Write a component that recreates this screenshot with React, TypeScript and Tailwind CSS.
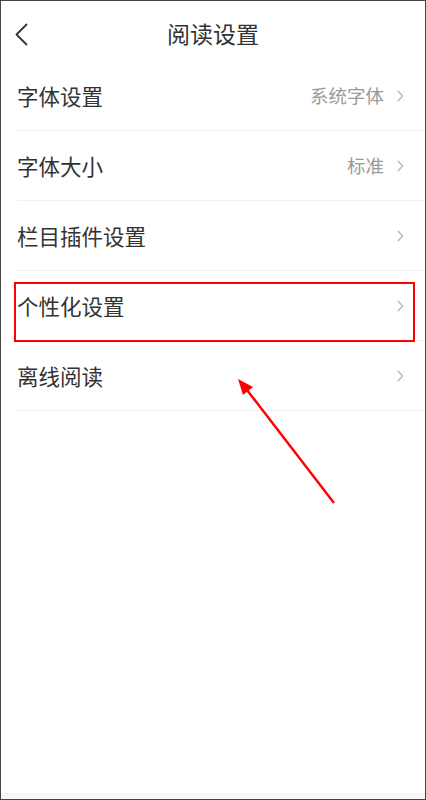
const rows = [
  { label: "字体设置", value: "系统字体" },
  { label: "字体大小", value: "标准" },
  { label: "栏目插件设置" },
  { label: "个性化设置" },
  { label: "离线阅读" },
];

function Chevron() {
  return (
    <svg width="7" height="12" viewBox="0 0 7 12" className="ml-[13px] shrink-0">
      <path d="M1.2 1.2 L5.6 6 L1.2 10.8" fill="none" stroke="#b8b8b8" strokeWidth="1.4" strokeLinecap="round" strokeLinejoin="round" />
    </svg>
  );
}

export default function App() {
  return (
    <div
      className="relative flex h-[800px] w-[426px] flex-col overflow-hidden border border-[#454545] bg-white text-[#333]"
      style={{ fontFamily: '"Noto Sans CJK SC", "Noto Sans", sans-serif' }}
    >
      <header className="relative flex h-[60px] items-start justify-center pt-[21px]">
        <button className="absolute left-[13px] top-[22px]">
          <svg width="15" height="23" viewBox="0 0 15 23">
            <path d="M12.5 1.5 L2.5 11.5 L12.5 21.5" fill="none" stroke="#333" strokeWidth="1.8" strokeLinecap="round" strokeLinejoin="round" />
          </svg>
        </button>
        <h1 className="text-[23px] leading-none">阅读设置</h1>
      </header>

      <ul>
        {rows.map((row) => (
          <li
            key={row.label}
            className="ml-[16px] flex h-[70px] items-center border-b border-[#efefef] pr-[21px]"
          >
            <span className="flex-1 text-[21.5px] leading-none">{row.label}</span>
            {row.value && <span className="text-[18.5px] leading-none text-[#9a9a9a]">{row.value}</span>}
            <Chevron />
          </li>
        ))}
      </ul>

      <div className="flex-1" />
      <div className="h-[6px] bg-[#f6f6f6]" />

      {/* annotation: highlight box */}
      <div className="pointer-events-none absolute left-[13px] top-[281px] h-[60px] w-[401px] border-2 border-[#f00]" />

      {/* annotation: arrow */}
      <svg className="pointer-events-none absolute left-0 top-0" width="426" height="800">
        <line x1="333" y1="502" x2="246" y2="389" stroke="#f00" strokeWidth="2.4" />
        <polygon points="237,378 252,386 242,394" fill="#f00" />
      </svg>
    </div>
  );
}
